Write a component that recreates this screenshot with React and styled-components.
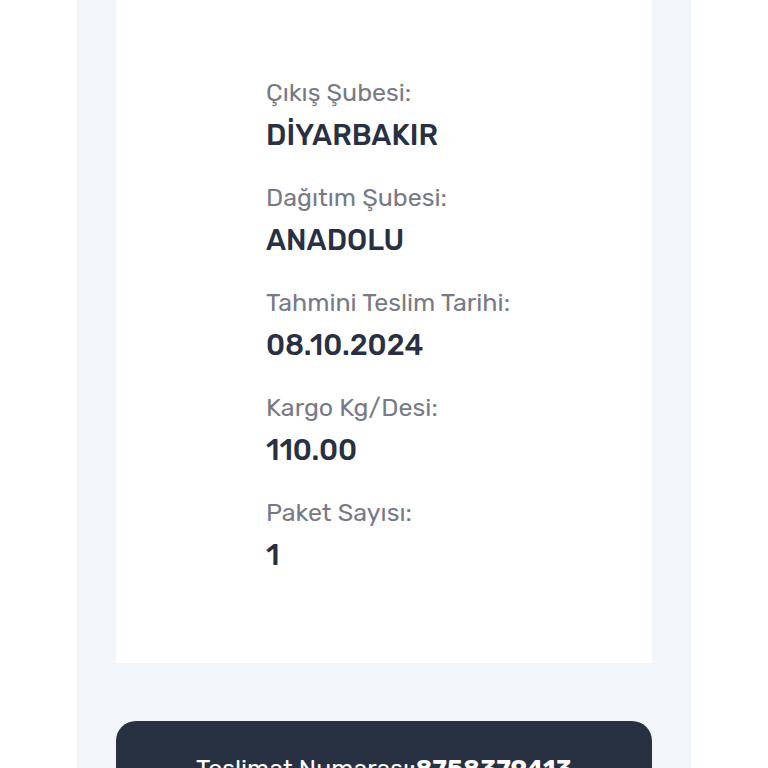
import React from "react";
import styled, { createGlobalStyle } from "styled-components";

const GlobalStyle = createGlobalStyle`
  body {
    margin: 0;
    background: #ffffff;
    font-family: Rubik, Roboto, "Open Sans", sans-serif;
  }
`;

const Page = styled.main`
  box-sizing: border-box;
  height: 100vh;
  overflow: hidden;
  margin: 0 10%;
  padding: 0 39px;
  background: #f2f6fa;
`;

const Card = styled.section`
  display: flex;
  justify-content: center;
  padding: 75px 0 85px;
  background: #ffffff;
`;

const Details = styled.dl`
  display: flex;
  flex-direction: column;
  gap: 22px;
  width: 236px;
  margin: 0;
`;

const Label = styled.dt`
  color: #777a86;
  font-size: 25px;
  line-height: 36px;
  white-space: nowrap;
`;

const Value = styled.dd`
  margin: 0;
  padding-top: 1px;
  color: #283041;
  font-size: 29px;
  font-weight: 500;
  line-height: 46px;
`;

const DeliveryBar = styled.section`
  margin-top: 58px;
  padding: 30px 24px;
  border-radius: 20px;
  background: #283142;
  color: #ffffff;
  font-size: 25px;
  line-height: 36px;
  text-align: center;
  white-space: nowrap;
`;

const DeliveryNumber = styled.strong`
  font-weight: 700;
`;

const details = [
  { label: "Çıkış Şubesi:", value: "DİYARBAKIR" },
  { label: "Dağıtım Şubesi:", value: "ANADOLU" },
  { label: "Tahmini Teslim Tarihi:", value: "08.10.2024" },
  { label: "Kargo Kg/Desi:", value: "110.00" },
  { label: "Paket Sayısı:", value: "1" }
];

const App = () => (
  <>
    <GlobalStyle />
    <Page lang="tr">
      <Card>
        <Details>
          {details.map(({ label, value }) => (
            <div key={label}>
              <Label>{label}</Label>
              <Value>{value}</Value>
            </div>
          ))}
        </Details>
      </Card>
      <DeliveryBar>
        Teslimat Numarası:<DeliveryNumber>8758379413</DeliveryNumber>
      </DeliveryBar>
    </Page>
  </>
);

export default App;
